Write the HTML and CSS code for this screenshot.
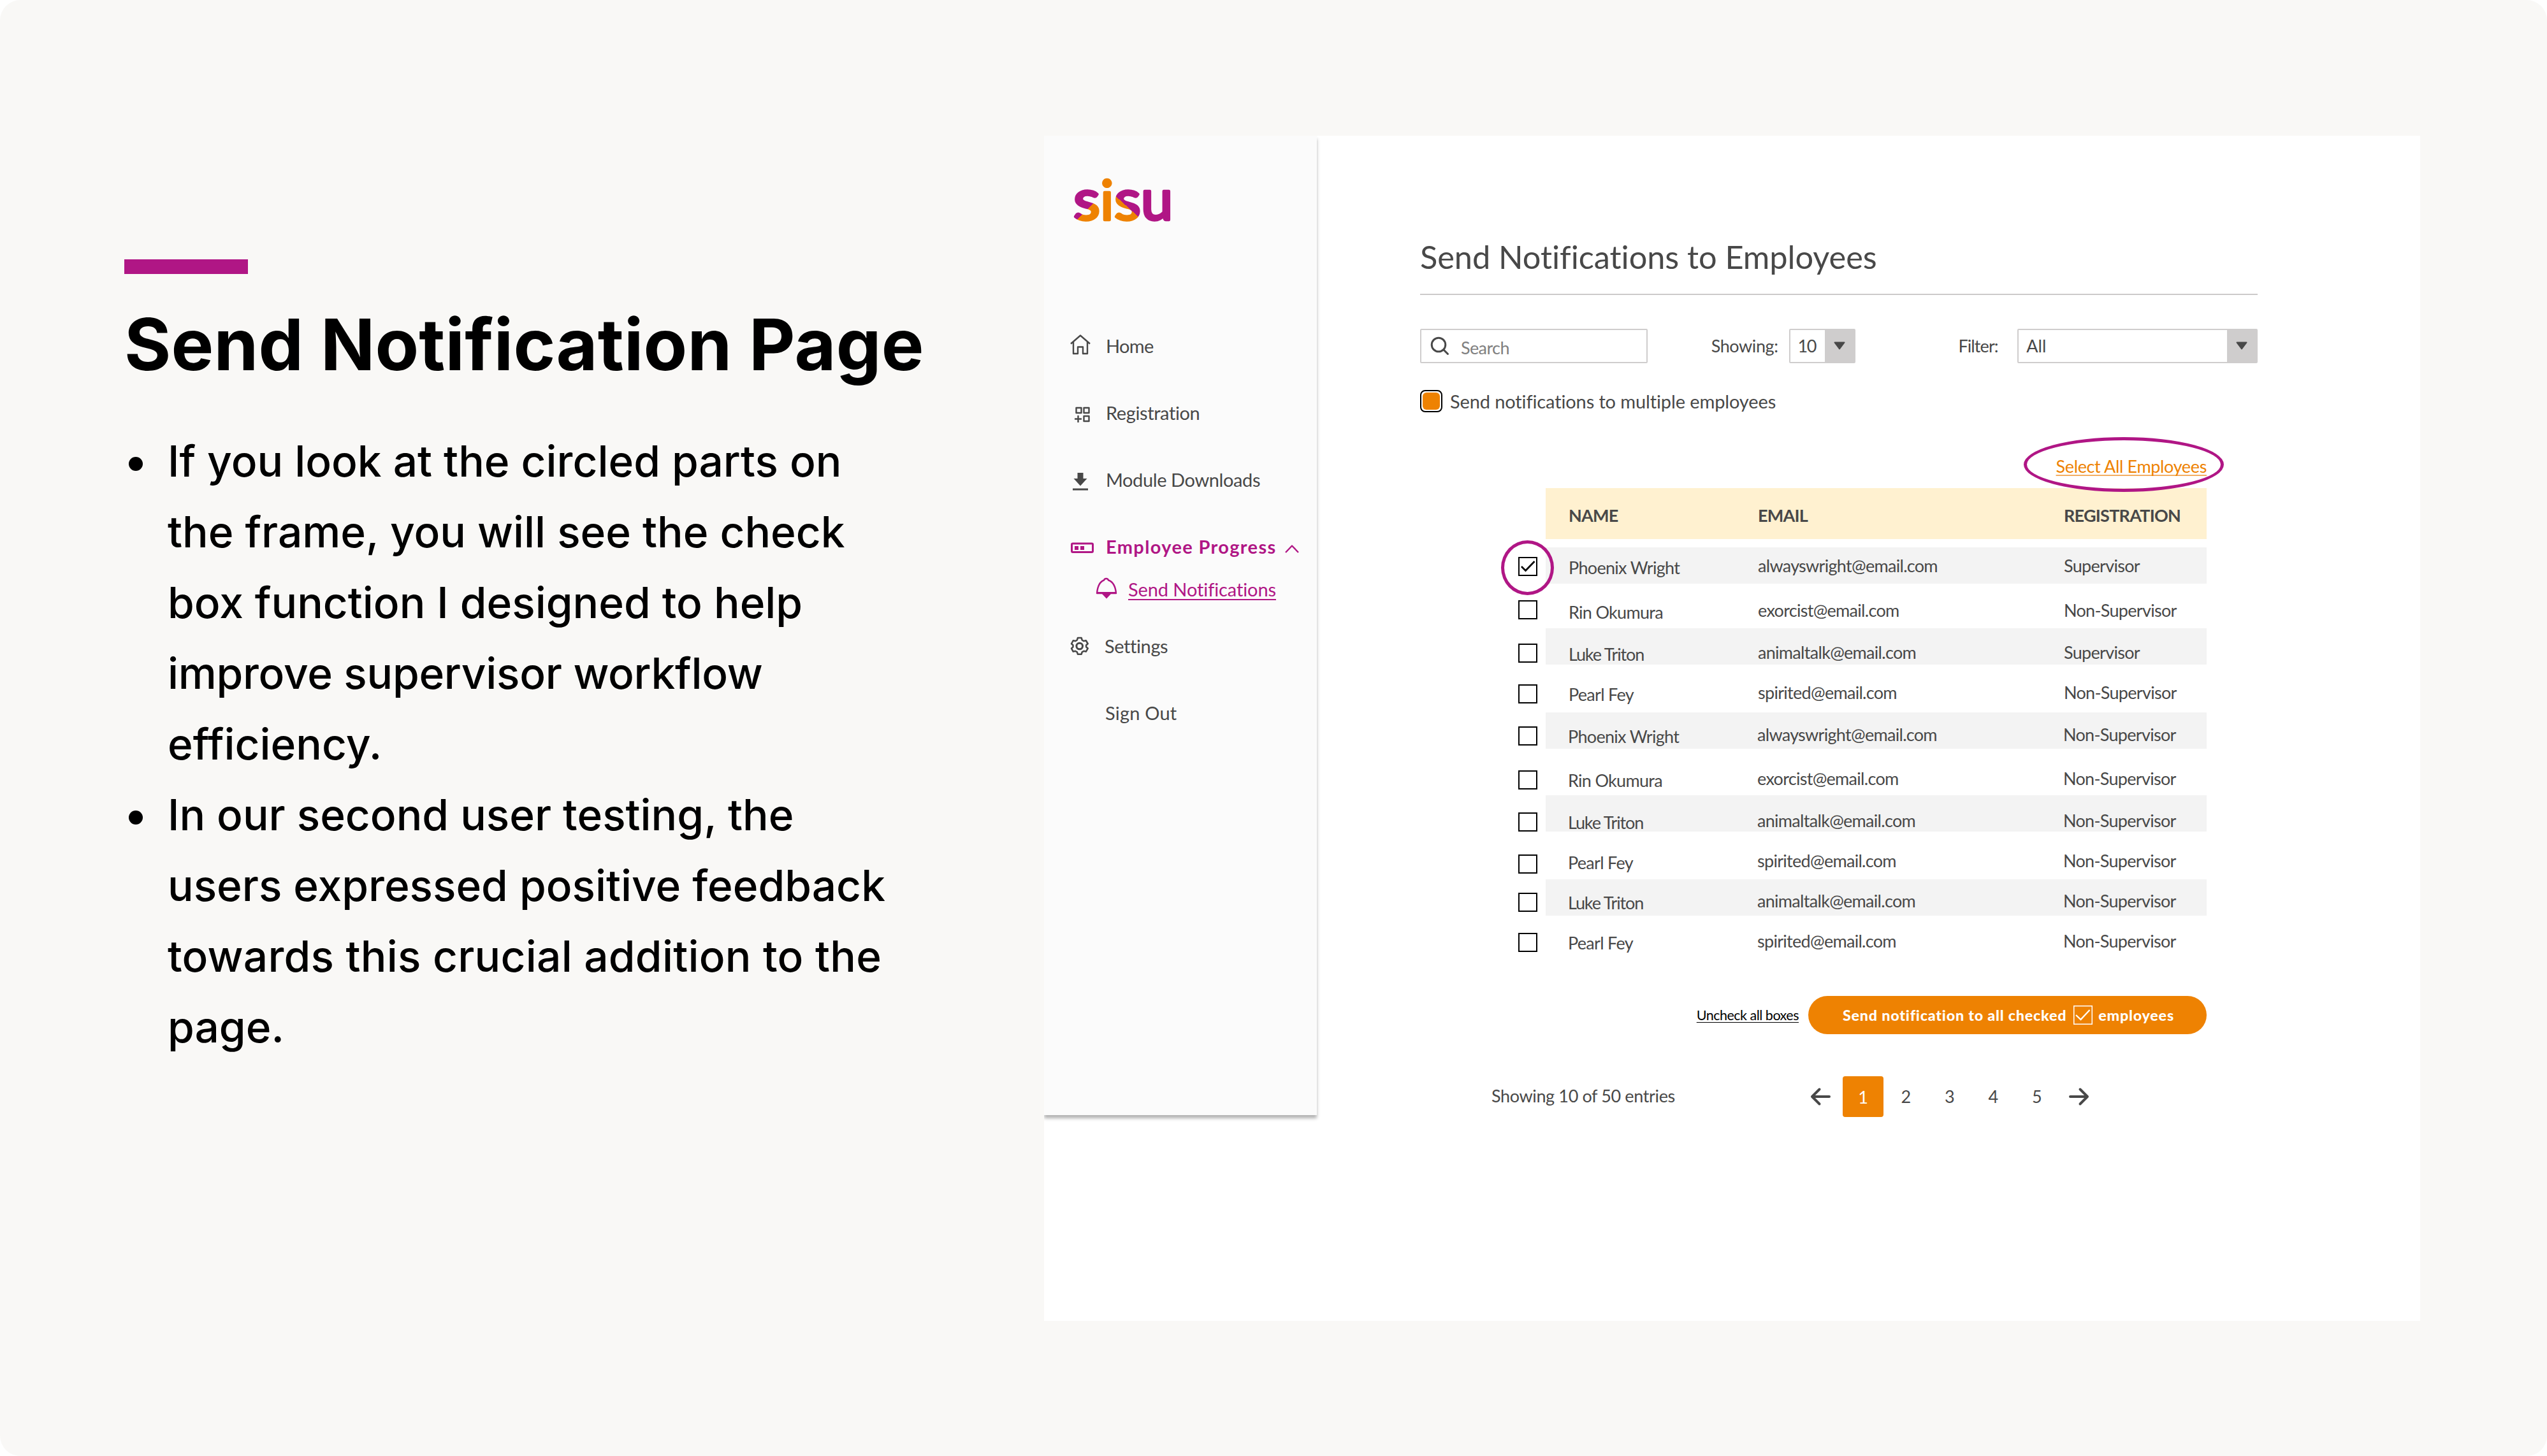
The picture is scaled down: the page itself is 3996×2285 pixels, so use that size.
FILE: index.html
```html
<!DOCTYPE html>
<html lang="en">
<head>
  <meta charset="UTF-8">
  <meta name="viewport" content="width=device-width, initial-scale=1.0">
  <title>Send Notification Page</title>
  <link rel="stylesheet" href="styles.css">
</head>
<body>

  <div class="slide">
    <section class="notes">
      <div class="accent-bar"></div>
      <h1>Send Notification Page</h1>
      <ul>
        <li>If you look at the circled parts on<br>the frame, you will see the check<br>box function I designed to help<br><span class="tight">improve supervisor workflow</span><br>efficiency.</li>
        <li>In our second user testing, the<br>users expressed positive feedback<br><span class="wide">towards this crucial addition to the</span><br>page.</li>
      </ul>
    </section>

    <div class="frame">
      <aside class="sidebar">
        <svg class="logo" width="170" height="80" viewBox="0 0 170 80">
          <defs>
            <linearGradient id="first-s" gradientUnits="userSpaceOnUse" x1="20" y1="18" x2="60" y2="58">
              <stop offset="0.49" stop-color="#b01685"/>
              <stop offset="0.49" stop-color="#ee8202"/>
            </linearGradient>
            <linearGradient id="second-s" gradientUnits="userSpaceOnUse" x1="104" y1="22" x2="66" y2="64">
              <stop offset="0.49" stop-color="#b01685"/>
              <stop offset="0.49" stop-color="#ee8202"/>
            </linearGradient>
          </defs>
          <text x="5" y="66.5" textLength="42" lengthAdjust="spacingAndGlyphs" fill="url(#first-s)" stroke="url(#first-s)">s</text>
          <text class="logo-i" x="47.5" y="66.5" fill="#ee8202" stroke="#ee8202">i</text>
          <text x="69" y="66.5" textLength="42" lengthAdjust="spacingAndGlyphs" fill="url(#second-s)" stroke="url(#second-s)">s</text>
          <text x="111" y="66.5" fill="#b01685" stroke="#b01685">u</text>
        </svg>

        <nav>
          <a class="nav-item home">
            <svg viewBox="0 0 40 40"><path d="M2 17.500 17 4.500 32 17.500M6 14.500V33H13V22.500H21V33H28V14.500"/></svg>
            <span>Home</span>
          </a>
          <a class="nav-item registration">
            <svg viewBox="0 0 40 40"><path d="M10.500 13h8v8h-8zM22.500 13h8v8h-8zM22.500 26h8v8h-8zM8 30.500h11M13.500 25v11"/></svg>
            <span>Registration</span>
          </a>
          <a class="nav-item downloads">
            <svg viewBox="0 0 40 40"><path class="solid" d="M12.500 10h9v9h6L17 30.500 6.500 19h6zM5 34.500h24v3H5z"/></svg>
            <span>Module Downloads</span>
          </a>
          <a class="nav-item active">
            <svg viewBox="0 0 40 40"><rect x="3.500" y="16" width="33" height="13.500" rx="1.500" stroke-width="3"/><path class="solid" d="M8 20h6v6H8zM17 20h6v6h-6z"/></svg>
            <span>Employee Progress</span>
            <svg class="chevron" viewBox="0 0 24 40"><path d="M2 30 12 19.500 22 30"/></svg>
          </a>
          <a class="nav-item sub">
            <svg viewBox="0 0 40 40"><path d="M5 27C6 16 9 9 16 6.500Q17 4 19.500 4T23 6.500C30 9 34 16 35 27z"/><path class="solid" d="M4 25h32v3H27L20 35.500 13 28H4z"/></svg>
            <span>Send Notifications</span>
          </a>
          <a class="nav-item settings">
            <svg viewBox="0 0 40 40"><path d="M12.100 7.500h6.800l1.200 4 3.200 1.900 4-1 3.400 5.900-3 2.700v3.200l3 2.700-3.400 5.900-4-1-3.200 1.900-1.200 3.900h-6.800l-1.200-3.900-3.200-1.900-4 1-3.200-5.900 2.900-2.700v-3.200l-2.900-2.700 3.200-5.900 4 1 3.200-1.900z" transform="translate(2.600 1.700) scale(.85)"/><circle cx="15.700" cy="21" r="4.800"/></svg>
            <span>Settings</span>
          </a>
          <a class="nav-item signout">
            <span>Sign Out</span>
          </a>
        </nav>
      </aside>

      <main>
        <h2>Send Notifications to Employees</h2>

        <div class="controls">
          <div class="search">
            <svg width="30" height="30" viewBox="0 0 30 30"><circle cx="13" cy="13" r="10.800"/><path d="M21 21l6.500 6.500"/></svg>
            <span>Search</span>
          </div>
          <span class="label showing">Showing:</span>
          <div class="select count"><span>10</span><i><svg width="20" height="14" viewBox="0 0 20 14"><path d="M2.500 1.500h15L10 11.500z"/></svg></i></div>
          <span class="label filter">Filter:</span>
          <div class="select all"><span>All</span><i><svg width="20" height="14" viewBox="0 0 20 14"><path d="M2.500 1.500h15L10 11.500z"/></svg></i></div>
        </div>

        <div class="multiple">
          <div class="toggle"></div>
          <span>Send notifications to multiple employees</span>
        </div>

        <div class="select-all">
          <span>Select All Employees</span>
          <div class="ring ring-link"></div>
        </div>

        <div class="table">
          <div class="head"><span>NAME</span><span>EMAIL</span><span>REGISTRATION</span></div>
          <div class="row">
            <div class="check"><svg viewBox="0 0 30 30"><path d="M5 15l6.500 6.500L25.500 7"/></svg><div class="ring ring-check"></div></div>
            <div class="cells"><span>Phoenix Wright</span><span>alwayswright@email.com</span><span>Supervisor</span></div>
          </div>
          <div class="row">
            <div class="check"></div>
            <div class="cells"><span>Rin Okumura</span><span>exorcist@email.com</span><span>Non-Supervisor</span></div>
          </div>
          <div class="row">
            <div class="check"></div>
            <div class="cells"><span class="luke">Luke Triton</span><span>animaltalk@email.com</span><span>Supervisor</span></div>
          </div>
          <div class="row">
            <div class="check"></div>
            <div class="cells"><span>Pearl Fey</span><span>spirited@email.com</span><span>Non-Supervisor</span></div>
          </div>
          <div class="row">
            <div class="check"></div>
            <div class="cells"><span>Phoenix Wright</span><span>alwayswright@email.com</span><span>Non-Supervisor</span></div>
          </div>
          <div class="row">
            <div class="check"></div>
            <div class="cells"><span>Rin Okumura</span><span>exorcist@email.com</span><span>Non-Supervisor</span></div>
          </div>
          <div class="row">
            <div class="check"></div>
            <div class="cells"><span class="luke">Luke Triton</span><span>animaltalk@email.com</span><span>Non-Supervisor</span></div>
          </div>
          <div class="row">
            <div class="check"></div>
            <div class="cells"><span>Pearl Fey</span><span>spirited@email.com</span><span>Non-Supervisor</span></div>
          </div>
          <div class="row">
            <div class="check"></div>
            <div class="cells"><span class="luke">Luke Triton</span><span>animaltalk@email.com</span><span>Non-Supervisor</span></div>
          </div>
          <div class="row">
            <div class="check"></div>
            <div class="cells"><span>Pearl Fey</span><span>spirited@email.com</span><span>Non-Supervisor</span></div>
          </div>
        </div>

        <div class="actions">
          <a class="uncheck">Uncheck all boxes</a>
          <button class="send">
            <span>Send notification to all checked</span>
            <svg width="30" height="30" viewBox="0 0 30 30"><path d="M.75.75h28.500v28.500H.75z" stroke-width="1.500"/><path d="M4 15l7.500 7L25.500 7" stroke-width="2.300"/></svg>
            <span>employees</span>
          </button>
        </div>

        <div class="footer">
          <span class="entries">Showing 10 of 50 entries</span>
          <div class="pages">
            <svg width="34" height="30" viewBox="0 0 34 30"><path d="M31 15H4M15.500 3.500 4 15l11.500 11.500"/></svg>
            <span class="current">1</span>
            <span>2</span>
            <span>3</span>
            <span>4</span>
            <span>5</span>
            <svg class="next" width="34" height="30" viewBox="0 0 34 30"><path d="M3 15h27M18.500 3.500 30 15 18.500 26.500"/></svg>
          </div>
        </div>
      </main>
    </div>
  </div>

</body>
</html>
```
FILE: styles.css
```css
* {
  box-sizing: border-box;
}
body {
  margin: 0;
  background-color: #fff;
  font-family: Lato, "Liberation Sans", sans-serif;
  color: #484848;
}
svg {
  display: block;
  fill: none;
  stroke: currentColor;
  overflow: visible;
}
.solid {
  fill: currentColor;
  stroke: none;
}
.slide {
  display: grid;
  grid-template-columns: 1638px 2159px;
  align-items: start;
  width: 3996px;
  height: 2285px;
  border-radius: 32px;
  background-color: #f9f8f6;
}

/* left column */
.notes {
  padding: 407px 0 0 195px;
  font-family: Inter, sans-serif;
  color: #000;
}
.accent-bar {
  width: 194px;
  height: 23px;
  background-color: #b01685;
}
h1 {
  margin: 43px 0 0;
  font-size: 112px;
  line-height: 134px;
  font-weight: 700;
  letter-spacing: 0.2px;
  white-space: nowrap;
}
ul {
  margin: 61px 0 0;
  padding: 0 0 0 68px;
  list-style: none;
  font-size: 67.6px;
  line-height: 111px;
  font-weight: 500;
  white-space: nowrap;
}
.tight {
  letter-spacing: -0.27px;
}
.wide {
  letter-spacing: 0.25px;
}
li {
  position: relative;
}
li::before {
  content: "";
  position: absolute;
  left: -61px;
  top: 49px;
  width: 22px;
  height: 22px;
  border-radius: 50%;
  background-color: #000;
}

/* app frame */
.frame {
  display: flex;
  align-items: flex-start;
  margin-top: 213px;
  height: 1860px;
  background-color: #fff;
}
.sidebar {
  width: 428px;
  height: 1537px;
  flex-shrink: 0;
  background-color: #fbfbfb;
  box-shadow: 0 5px 5px rgba(0, 0, 0, 0.3);
  clip-path: inset(0 -6px -12px 0);
}
.logo {
  margin: 65px 0 0 41px;
  font-size: 90px;
  font-weight: 400;
  stroke-width: 4.5;
  stroke-linejoin: round;
}
.logo-i {
  font-size: 86px;
}
nav {
  display: flex;
  flex-direction: column;
  margin-top: 165px;
}
.nav-item {
  display: flex;
  height: 40px;
  margin: 0 0 65px 40px;
  font-size: 29px;
  line-height: 40px;
  letter-spacing: -0.4px;
  white-space: nowrap;
}
.nav-item svg {
  width: 40px;
  height: 40px;
  margin-top: -1px;
  margin-right: 17px;
  stroke-width: 2.4;
  stroke-linejoin: round;
}
.home {
  letter-spacing: -0.7px;
}
.active,
.sub {
  color: #b01685;
}
.active {
  margin-bottom: 27px;
  font-weight: 700;
  letter-spacing: 1.35px;
}
.nav-item .chevron {
  width: 24px;
  margin: -1px 0 0 12px;
}
.sub {
  margin: 0 0 49px 78px;
  letter-spacing: -0.1px;
}
.nav-item.sub svg {
  margin-right: 14px;
}
.sub span {
  text-decoration: underline;
  text-decoration-thickness: 2px;
  text-underline-offset: 4px;
  text-decoration-skip-ink: none;
}
.nav-item.settings svg {
  margin-right: 15px;
  stroke-width: 3;
}
.signout {
  margin-left: 96px;
  letter-spacing: 0.2px;
}

/* main content */
main {
  display: flex;
  flex-direction: column;
  width: 1314px;
  margin: 157px 0 0 162px;
  font-size: 27px;
}
h2 {
  height: 93px;
  margin: 0;
  border-bottom: 2px solid #cccaca;
  font-size: 50.5px;
  line-height: 65px;
  font-weight: 400;
  letter-spacing: -0.05px;
}
.controls {
  display: flex;
  align-items: center;
  height: 54px;
  margin-top: 53px;
}
.search {
  display: flex;
  align-items: center;
  width: 357px;
  height: 54px;
  padding-left: 14px;
  border: 2px solid #cfcdcd;
  border-radius: 2px;
}
.search svg {
  stroke-width: 3;
  stroke-linecap: round;
}
.search span {
  margin: 4px 0 0 18px;
  color: #808080;
  letter-spacing: -0.6px;
}
.label {
  line-height: 54px;
  letter-spacing: -0.4px;
}
.showing {
  width: 122px;
  margin-left: 100px;
}
.filter {
  width: 93px;
  margin-left: 161px;
  letter-spacing: -0.9px;
}
.select {
  display: flex;
  justify-content: space-between;
  height: 54px;
  border: 2px solid #cfcdcd;
  border-radius: 2px;
  line-height: 50px;
}
.select span {
  padding-left: 12px;
  letter-spacing: -1.5px;
}
.all span {
  letter-spacing: 0;
}
.select i {
  display: flex;
  align-items: center;
  justify-content: center;
  width: 46px;
  background-color: #cfcdcd;
}
.select path {
  fill: #484848;
  stroke-width: 2;
  stroke-linejoin: round;
}
.count {
  width: 105px;
}
.all {
  width: 377px;
}
.multiple {
  display: flex;
  align-items: center;
  height: 35px;
  margin-top: 42px;
  font-size: 29px;
  letter-spacing: -0.12px;
}
.toggle {
  width: 35px;
  height: 35px;
  margin-right: 12px;
  padding: 2px;
  border: 2px solid #000;
  border-radius: 8px;
}
.toggle::before {
  content: "";
  display: block;
  height: 100%;
  border-radius: 6px;
  background-color: #ee8202;
}
.select-all {
  position: relative;
  align-self: flex-end;
  height: 36px;
  margin: 67px 80px 0 0;
  line-height: 36px;
  color: #ee8202;
  letter-spacing: -0.35px;
}
.select-all span {
  text-decoration: underline;
  text-decoration-color: #f3ae62;
  text-decoration-thickness: 2px;
  text-underline-offset: 3px;
  text-decoration-skip-ink: none;
}
.ring {
  position: absolute;
  z-index: 1;
  border: 5px solid #b01685;
  border-radius: 50%;
}
.ring-link {
  right: -27px;
  top: -28px;
  width: 314px;
  height: 86px;
}
.ring-check {
  left: -29px;
  top: -28px;
  width: 83px;
  height: 86px;
}

/* employee table */
.table {
  width: 1080px;
  margin: 16px 0 0 154px;
}
.head,
.cells {
  display: grid;
  grid-template-columns: 297px 480px 1fr;
  padding-left: 36px;
}
.head {
  height: 80px;
  margin: 0 0 13px 43px;
  line-height: 85px;
  font-weight: 700;
  letter-spacing: -0.75px;
  background-color: #fff1d0;
}
.row {
  display: grid;
  grid-template-columns: 43px 1fr;
  grid-template-rows: 100%;
  height: 57px;
}
.check {
  position: relative;
  width: 30px;
  height: 30px;
  margin-top: 15px;
  border: 2px solid #000;
}
.check svg {
  margin: -2px;
  width: 30px;
  height: 30px;
  color: #000;
  stroke-width: 2.7;
}
.cells {
  align-items: start;
  padding-top: 10px;
  line-height: 38px;
  letter-spacing: -0.7px;
}
.cells span:first-child {
  margin-top: 3px;
}
.cells .luke {
  letter-spacing: -1.15px;
}
.row:nth-child(even) .cells {
  background-color: #f3f3f3;
}
.row:nth-child(n+6) .cells {
  padding-left: 35px;
}

/* per row heights and offsets */
.row:nth-child(3) { height: 70px; }
.row:nth-child(3) .check { margin-top: 26px; }
.row:nth-child(3) .cells { padding-top: 23px; }
.row:nth-child(4) .check { margin-top: 24px; }
.row:nth-child(4) .cells { padding-top: 19px; }
.row:nth-child(5) { height: 75px; }
.row:nth-child(5) .check { margin-top: 31px; }
.row:nth-child(5) .cells { padding-top: 25px; }
.row:nth-child(6) .check { margin-top: 22px; }
.row:nth-child(6) .cells { padding-top: 16px; }
.row:nth-child(7) { height: 73px; }
.row:nth-child(7) .check { margin-top: 34px; }
.row:nth-child(7) .cells { padding-top: 28px; }
.row:nth-child(8) .check { margin-top: 27px; }
.row:nth-child(8) .cells { padding-top: 21px; }
.row:nth-child(9) { height: 75px; }
.row:nth-child(9) .check { margin-top: 36px; }
.row:nth-child(9) .cells { padding-top: 27px; }
.row:nth-child(10) .check { margin-top: 21px; }
.row:nth-child(10) .cells { padding-top: 15px; }
.row:nth-child(11) { height: 70px; }
.row:nth-child(11) .check { margin-top: 27px; }
.row:nth-child(11) .cells { padding-top: 21px; }

/* bottom actions */
.actions {
  display: flex;
  align-items: center;
  justify-content: flex-end;
  height: 60px;
  margin: 56px 80px 0 0;
}
.uncheck {
  margin-right: 15px;
  font-size: 21.5px;
  letter-spacing: -0.5px;
  color: #000;
  text-decoration: underline;
  text-decoration-thickness: 1px;
  text-underline-offset: 3px;
  text-decoration-skip-ink: none;
}
.send {
  display: flex;
  align-items: center;
  width: 625px;
  height: 60px;
  padding: 0 0 0 54px;
  border: none;
  border-radius: 30px;
  font-family: inherit;
  font-size: 23.3px;
  font-weight: 900;
  letter-spacing: 0.78px;
  white-space: nowrap;
  color: #fff;
  background-color: #ee8202;
}
.send svg {
  margin: 0 9px 0 11px;
}
.footer {
  display: flex;
  align-items: center;
  justify-content: space-between;
  height: 64px;
  margin: 66px 263px 0 112px;
}
.entries {
  margin-top: -4px;
  letter-spacing: -0.37px;
}
.pages {
  display: flex;
  align-items: center;
}
.pages svg {
  stroke-width: 4;
  stroke-linecap: round;
  stroke-linejoin: round;
}
.pages span {
  width: 68.5px;
  line-height: 66px;
  text-align: center;
}
.pages .current {
  width: 64px;
  height: 64px;
  margin: 0 1px 0 18px;
  border-radius: 4px;
  color: #fff;
  background-color: #ee8202;
}
.pages .next {
  margin-left: 15px;
}
```
